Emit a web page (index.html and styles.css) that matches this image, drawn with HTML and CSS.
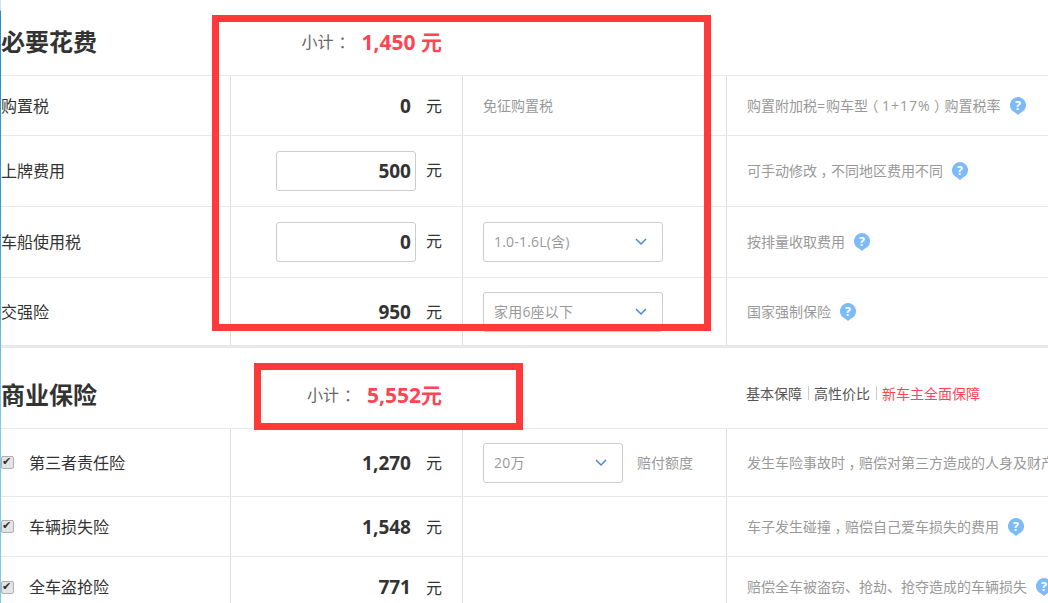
FILE: index.html
```html
<!DOCTYPE html>
<html lang="zh-CN">
<head>
<meta charset="utf-8">
<title>购车费用</title>
<link rel="stylesheet" href="styles.css">
</head>
<body>
<main class="page">
  <section class="section section-first">
    <header class="head head-first">
      <h2 class="title">必要花费</h2>
      <div class="subtotal"><span class="sub-label">小计<span class="colon">：</span></span><strong class="sub-value">1,450 元</strong></div>
    </header>
    <div class="row row-60">
      <div class="name">购置税</div>
      <div class="amount"><b class="num">0</b><span class="unit">元</span></div>
      <div class="option"><span class="note">免征购置税</span></div>
      <div class="desc"><span>购置附加税<span class="latin">=</span>购车型<span class="cm">（</span><span class="latin">1+17%</span><span class="cm">）</span>购置税率</span><svg class="help" viewBox="0 0 18 20"><path class="pin" d="M9 0a9 9 0 0 1 3 17.500L9 20l-3-2.500A9 9 0 0 1 9 0z"/><text class="q" x="9" y="14">?</text></svg></div>
    </div>
    <div class="row row-71">
      <div class="name">上牌费用</div>
      <div class="amount"><input class="box" type="text" value="500"><span class="unit">元</span></div>
      <div class="option"></div>
      <div class="desc"><span>可手动修改<span class="cm">，</span>不同地区费用不同</span><svg class="help" viewBox="0 0 18 20"><path class="pin" d="M9 0a9 9 0 0 1 3 17.500L9 20l-3-2.500A9 9 0 0 1 9 0z"/><text class="q" x="9" y="14">?</text></svg></div>
    </div>
    <div class="row row-71">
      <div class="name">车船使用税</div>
      <div class="amount"><input class="box" type="text" value="0"><span class="unit">元</span></div>
      <div class="option"><div class="select"><span>1.0-1.6L(含)</span><svg class="chev" viewBox="0 0 12 8"><path d="M1 1l5 5 5-5"/></svg></div></div>
      <div class="desc"><span>按排量收取费用</span><svg class="help" viewBox="0 0 18 20"><path class="pin" d="M9 0a9 9 0 0 1 3 17.500L9 20l-3-2.500A9 9 0 0 1 9 0z"/><text class="q" x="9" y="14">?</text></svg></div>
    </div>
    <div class="row row-67">
      <div class="name">交强险</div>
      <div class="amount"><b class="num">950</b><span class="unit">元</span></div>
      <div class="option"><div class="select"><span>家用6座以下</span><svg class="chev" viewBox="0 0 12 8"><path d="M1 1l5 5 5-5"/></svg></div></div>
      <div class="desc"><span>国家强制保险</span><svg class="help" viewBox="0 0 18 20"><path class="pin" d="M9 0a9 9 0 0 1 3 17.500L9 20l-3-2.500A9 9 0 0 1 9 0z"/><text class="q" x="9" y="14">?</text></svg></div>
    </div>
    <div class="annot annot-a"></div>
  </section>
  <section class="section">
    <header class="head head-second">
      <h2 class="title">商业保险</h2>
      <div class="subtotal"><span class="sub-label">小计<span class="colon">：</span></span><strong class="sub-value">5,552元</strong></div>
      <nav class="plans"><a>基本保障</a><i></i><a>高性价比</a><i></i><a class="plan-on">新车主全面保障</a></nav>
    </header>
    <div class="row row-68">
      <label class="name check"><input type="checkbox" checked disabled>第三者责任险</label>
      <div class="amount"><b class="num">1,270</b><span class="unit">元</span></div>
      <div class="option"><div class="select select-sm"><span>20万</span><svg class="chev" viewBox="0 0 12 8"><path d="M1 1l5 5 5-5"/></svg></div><span class="note">赔付额度</span></div>
      <div class="desc"><span>发生车险事故时<span class="cm">，</span>赔偿对第三方造成的人身及财产</span></div>
    </div>
    <div class="row row-60">
      <label class="name check"><input type="checkbox" checked disabled>车辆损失险</label>
      <div class="amount"><b class="num">1,548</b><span class="unit">元</span></div>
      <div class="option"></div>
      <div class="desc"><span>车子发生碰撞<span class="cm">，</span>赔偿自己爱车损失的费用</span><svg class="help" viewBox="0 0 18 20"><path class="pin" d="M9 0a9 9 0 0 1 3 17.500L9 20l-3-2.500A9 9 0 0 1 9 0z"/><text class="q" x="9" y="14">?</text></svg></div>
    </div>
    <div class="row row-60 row-last">
      <label class="name check"><input type="checkbox" checked disabled>全车盗抢险</label>
      <div class="amount"><b class="num">771</b><span class="unit">元</span></div>
      <div class="option"></div>
      <div class="desc"><span>赔偿全车被盗窃、抢劫、抢夺造成的车辆损失</span><svg class="help" viewBox="0 0 18 20"><path class="pin" d="M9 0a9 9 0 0 1 3 17.500L9 20l-3-2.500A9 9 0 0 1 9 0z"/><text class="q" x="9" y="14">?</text></svg></div>
    </div>
    <div class="annot annot-b"></div>
  </section>
</main>
</body>
</html>
```

FILE: styles.css
```css
* { box-sizing: border-box; }
html, body { margin: 0; height: 603px; overflow: hidden; background: #fff; }
body {
  font-family: "Open Sans", "Noto Sans CJK SC", sans-serif;
  color: #333;
}
.page {
  height: 603px;
  overflow: hidden;
  padding-left: 1px;
  background: linear-gradient(#cfe2f3 0, #cfe2f3 10px, #2a8ccf 11px, #2f9ad8 200px, #7cc8f0 400px, #7cc8f0 100%) 0 0 / 1px 100% no-repeat;
}
.section { position: relative; }
.section-first { border-bottom: 3px solid #e8e8e8; }

.head { position: relative; display: flex; align-items: center; border-bottom: 1px solid #e8e8e8; }
.head-first { height: 76px; padding-top: 8px; }
.head-first .subtotal { padding-bottom: 2px; }
.head-second { height: 81px; padding-top: 14px; }
.head-second .subtotal { padding-bottom: 3px; }
.title { margin: 0; width: 229px; font-size: 24px; line-height: 32px; font-weight: 700; color: #333; }
.subtotal { width: 212px; display: flex; justify-content: flex-end; align-items: center; }
.sub-label { font-size: 16px; color: #666; margin-right: 7px; }
.colon { font-family: "Noto Sans CJK TC", sans-serif; margin-left: 5px; }
.sub-value { font-size: 21px; font-weight: 700; color: #ff4455; }
.plans { margin-left: 304px; display: flex; align-items: center; font-size: 14px; padding-bottom: 4px; color: #555; }
.plans i { width: 1px; height: 14px; background: #ccc; margin: 0 5px 0 6px; }
.plan-on { color: #ff4455; }

.row { display: grid; grid-template-columns: 229px 232px 264px 1fr; border-bottom: 1px solid #e8e8e8; }
.row-60 { height: 60px; }
.row-71 { height: 71px; }
.row-67 { height: 67px; border-bottom: 0; }
.row-68 { height: 68px; }
.row-last { border-bottom: 0; }
.row > div { display: flex; align-items: center; min-width: 0; }
.row > .amount, .row > .option, .row > .desc { border-left: 1px solid #ddd; }

.name { font-size: 16px; color: #333; display: flex; align-items: center; padding-bottom: 2px; }
.check input {
  appearance: none;
  position: relative;
  margin: 2px 15px 0 0; width: 13px; height: 13px; flex: none;
  border: 1px solid #b0b0b0; border-radius: 2px; background: #e4e4e4;
}
.check input::after {
  content: "✔";
  position: absolute; left: 0; top: -2px;
  font: 11px/13px "DejaVu Sans", sans-serif; color: #333;
}
.amount { justify-content: flex-end; padding-right: 20px; gap: 15px; }
.amount .box + .unit { margin-left: -5px; padding-bottom: 4px; }
.num { font-size: 19px; font-weight: 700; color: #333; }
.unit { font-size: 16px; color: #333; padding-bottom: 1px; }
.box {
  width: 140px; height: 40px; padding: 0 4px 0 0; margin: 0;
  border: 1px solid #ccc; border-radius: 3px; outline: 0; background: #fff;
  font: 700 19px "Open Sans", sans-serif; color: #333; text-align: right;
}
.option { padding-left: 20px; gap: 14px; }
.note { font-size: 14px; color: #999; padding-bottom: 2px; }
.select {
  width: 180px; height: 40px; padding: 0 15px 0 10px;
  display: flex; align-items: center; justify-content: space-between;
  border: 1px solid #ccc; border-radius: 3px; font-size: 14px; color: #999;
}
.select span { padding-bottom: 2px; letter-spacing: .2px; }
.select-sm { width: 140px; }
.chev { width: 12px; height: 8px; fill: none; stroke: #4a86d8; stroke-width: 1.5; }
.desc { padding-left: 20px; font-size: 14px; color: #999; white-space: nowrap; overflow: hidden; gap: 9px; }
.desc > span { padding-bottom: 2px; }
.latin { letter-spacing: 1px; }
.cm { display: inline-block; width: 14px; text-align: center; font-feature-settings: "halt"; }
.help { width: 16px; height: 18px; flex: none; }
.pin { fill: #7dbaf8; }
.q { font: 700 14px "Open Sans", sans-serif; fill: #fff; text-anchor: middle; }

.annot { position: absolute; border: 7px solid #ff3a3a; pointer-events: none; }
.annot-a { left: 211px; top: 15px; width: 499px; height: 316px; }
.annot-b { left: 253px; top: 15px; width: 269px; height: 67px; }
```
